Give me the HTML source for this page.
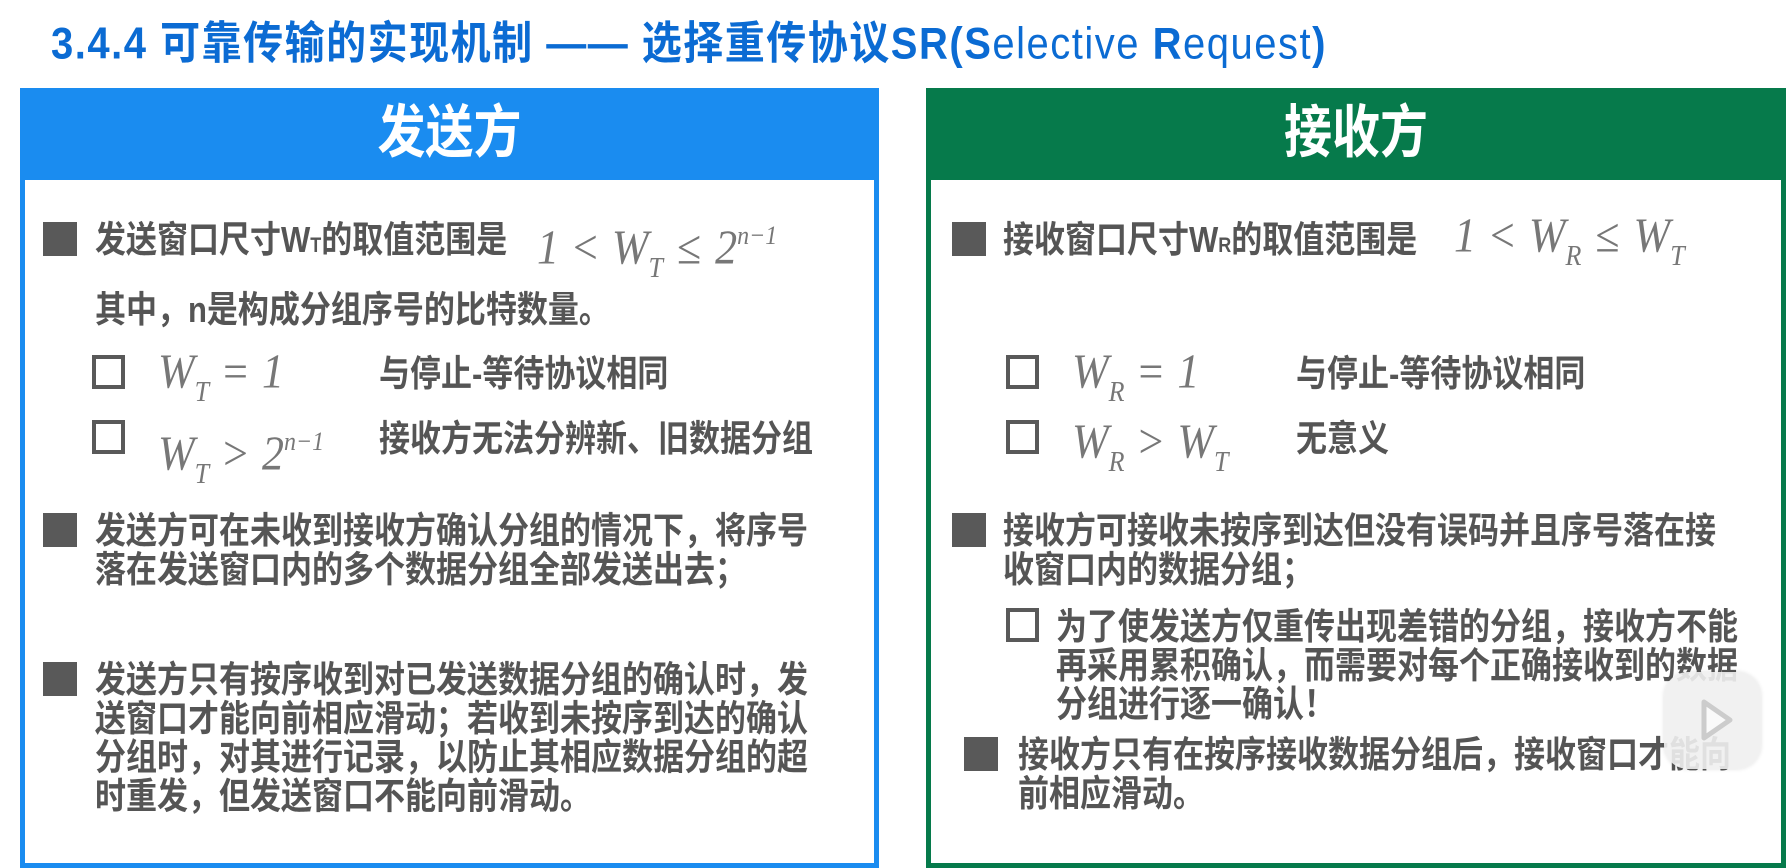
<!DOCTYPE html>
<html><head><meta charset="utf-8">
<style>
*{margin:0;padding:0;box-sizing:border-box}
body{width:1788px;height:850px;overflow:hidden;background:#fff;position:relative;font-family:"Liberation Sans","Noto Sans CJK SC",sans-serif}
.t{position:absolute;font-weight:bold;color:#555;font-size:31px;line-height:33px;white-space:nowrap;transform:scaleY(1.18);transform-origin:left top}
.m{position:absolute;font-family:"Liberation Serif",serif;font-style:italic;color:#777;font-size:44px;white-space:nowrap;line-height:44px;transform:scaleY(1.1);transform-origin:left top}
.m sub{font-size:26px;vertical-align:-12px}
.m sup{font-size:24px;vertical-align:18px}
.up{font-style:normal;margin:0 14px}
.b{position:absolute;width:34px;height:34px;background:#595959}
.c{position:absolute;width:33px;height:34px;border:4px solid #595959;background:#fff}
.panel{position:absolute;top:88px;height:780px}
.hd{position:absolute;left:0;right:0;top:0;height:92px;color:#fff;font-weight:bold;font-size:48px;text-align:center;line-height:92px}
.hd span{display:inline-block;transform:scaleY(1.2)}
</style></head><body>
<div class="t" style="left:51px;top:18px;font-size:40px;line-height:46px;color:#0b6bd3;letter-spacing:1.5px;transform:scaleY(1.12)">3.4.4 可靠传输的实现机制 —— 选择重传协议SR(<b>S</b><span style="font-weight:normal">elective </span>R<span style="font-weight:normal">equest</span>)</div>

<div class="panel" style="left:20px;width:859px;border:5px solid #1a8cf0;border-top:none"><div class="hd" style="background:#1a8cf0;left:-5px;right:-5px"><span>发送方</span></div></div>
<div class="panel" style="left:926px;width:860px;border:5px solid #067a4b;border-top:none"><div class="hd" style="background:#067a4b;left:-5px;right:-5px"><span>接收方</span></div></div>

<!-- left -->
<div class="b" style="left:43px;top:222px"></div>
<div class="t" style="left:95px;top:220px">发送窗口尺寸W<span style="font-size:18px">T</span>的取值范围是</div>
<div class="m" style="left:537px;top:212px">1<span class="up">&lt;</span>W<sub>T</sub><span class="up">≤</span>2<sup>n−1</sup></div>
<div class="t" style="left:95px;top:290px">其中，n是构成分组序号的比特数量。</div>
<div class="c" style="left:92px;top:355px"></div>
<div class="m" style="left:158px;top:348px">W<sub>T</sub><span class="up">=</span>1</div>
<div class="t" style="left:379px;top:354px">与停止-等待协议相同</div>
<div class="c" style="left:92px;top:420px"></div>
<div class="m" style="left:158px;top:418px">W<sub>T</sub><span class="up">&gt;</span>2<sup>n−1</sup></div>
<div class="t" style="left:379px;top:419px">接收方无法分辨新、旧数据分组</div>
<div class="b" style="left:43px;top:513px"></div>
<div class="t" style="left:95px;top:511px">发送方可在未收到接收方确认分组的情况下，将序号<br>落在发送窗口内的多个数据分组全部发送出去；</div>
<div class="b" style="left:43px;top:662px"></div>
<div class="t" style="left:95px;top:660px">发送方只有按序收到对已发送数据分组的确认时，发<br>送窗口才能向前相应滑动；若收到未按序到达的确认<br>分组时，对其进行记录，以防止其相应数据分组的超<br>时重发，但发送窗口不能向前滑动。</div>

<!-- right -->
<div class="b" style="left:952px;top:222px"></div>
<div class="t" style="left:1003px;top:220px">接收窗口尺寸W<span style="font-size:18px">R</span>的取值范围是</div>
<div class="m" style="left:1454px;top:212px">1<span class="up">&lt;</span>W<sub>R</sub><span class="up">≤</span>W<sub>T</sub></div>
<div class="c" style="left:1006px;top:355px"></div>
<div class="m" style="left:1072px;top:348px">W<sub>R</sub><span class="up">=</span>1</div>
<div class="t" style="left:1296px;top:354px">与停止-等待协议相同</div>
<div class="c" style="left:1006px;top:420px"></div>
<div class="m" style="left:1072px;top:418px">W<sub>R</sub><span class="up">&gt;</span>W<sub>T</sub></div>
<div class="t" style="left:1296px;top:419px">无意义</div>
<div class="b" style="left:952px;top:513px"></div>
<div class="t" style="left:1003px;top:511px">接收方可接收未按序到达但没有误码并且序号落在接<br>收窗口内的数据分组；</div>
<div class="c" style="left:1006px;top:608px"></div>
<div class="t" style="left:1056px;top:607px">为了使发送方仅重传出现差错的分组，接收方不能<br>再采用累积确认，而需要对每个正确接收到的数据<br>分组进行逐一确认！</div>
<div class="b" style="left:964px;top:737px"></div>
<div class="t" style="left:1018px;top:735px">接收方只有在按序接收数据分组后，接收窗口才能向<br>前相应滑动。</div>

<div style="position:absolute;left:1664px;top:672px;width:97px;height:97px;border-radius:24px;background:rgba(240,240,240,0.9);box-shadow:0 0 4px rgba(0,0,0,0.12)"></div>
<svg style="position:absolute;left:1664px;top:672px" width="97" height="97"><path d="M40 30 L66 48 L40 66 Z" fill="#fafafa" stroke="#ccc" stroke-width="5" stroke-linejoin="round"/></svg>
</body></html>
